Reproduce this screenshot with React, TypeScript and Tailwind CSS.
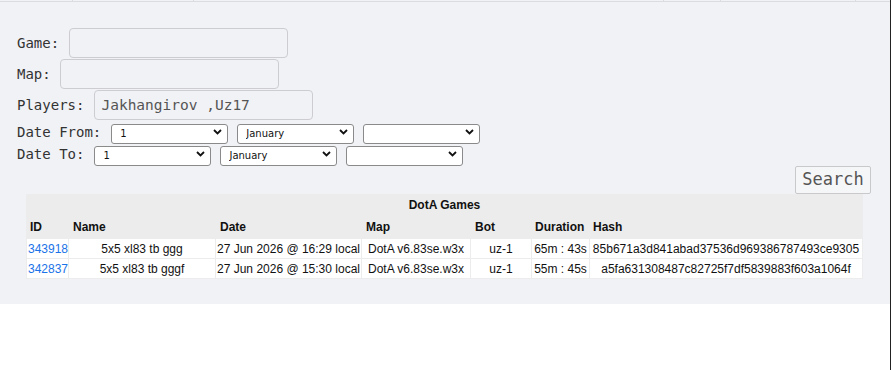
import React from 'react';

const games = [
  { id: '343918', name: '5x5 xl83 tb ggg', date: '27 Jun 2026 @ 16:29 local', map: 'DotA v6.83se.w3x', bot: 'uz-1', duration: '65m : 43s', hash: '85b671a3d841abad37536d969386787493ce9305' },
  { id: '342837', name: '5x5 xl83 tb gggf', date: '27 Jun 2026 @ 15:30 local', map: 'DotA v6.83se.w3x', bot: 'uz-1', duration: '55m : 45s', hash: 'a5fa631308487c82725f7df5839883f603a1064f' },
];

const Chevron = () => (
  <svg className="pointer-events-none absolute right-[6px] top-1/2 -translate-y-1/2" width="9" height="6" viewBox="0 0 9 6">
    <path d="M1 1 L4.5 4.5 L8 1" fill="none" stroke="#111" strokeWidth="1.8" />
  </svg>
);

const Select = ({ value }: { value: string }) => (
  <div className="relative w-[117px] h-[20px]">
    <select
      defaultValue={value}
      className="appearance-none w-full h-full bg-white border border-[#8a8a8a] rounded-[3px] pl-[8px] text-[10px] text-[#111] font-['DejaVu_Sans',sans-serif] outline-none"
    >
      <option value={value}>{value}</option>
    </select>
    <Chevron />
  </div>
);

const DateRow = ({ label }: { label: string }) => (
  <div className="flex items-center h-[20px] mt-[2px]">
    <span>{label}</span>
    <div className="flex gap-[9px] ml-[10px]">
      <Select value="1" />
      <Select value="January" />
      <Select value="" />
    </div>
  </div>
);

const Field = ({ label, value, ml }: { label: string; value?: string; ml: string }) => (
  <div className="flex items-center h-[30px] mt-[1px]">
    <span>{label}</span>
    <input
      defaultValue={value}
      className={`${ml} w-[219px] h-[30px] bg-transparent border border-[#cdcdd1] rounded-[4px] px-[6px] text-[14.5px] text-[#555] outline-none font-['DejaVu_Sans_Mono',monospace]`}
    />
  </div>
);

export default function App() {
  return (
    <div className="flex w-[891px] h-[370px] bg-white">
      <div className="w-[890px] self-start bg-[#f1f2f6] pb-[25px] font-['DejaVu_Sans_Mono',monospace] text-[14px] text-[#333]">
        {/* clipped previous row */}
        <div className="flex h-[2px] border-b border-[#dcdcde]">
          <span className="w-[73px] border-r border-[#dcdcde]" />
          <span className="w-[121px] border-r border-[#dcdcde]" />
          <span className="w-[470px] border-r border-[#dcdcde]" />
          <span className="w-[57px] border-r border-[#dcdcde]" />
          <span className="w-[135px] border-r border-[#dcdcde]" />
        </div>

        <div className="pl-[17px] mt-[26px]">
          <Field label="Game:" ml="ml-[10px]" />
          <Field label="Map:" ml="ml-[9px]" />
          <Field label="Players:" ml="ml-[10px]" value="Jakhangirov ,Uz17" />
          <DateRow label="Date From:" />
          <DateRow label="Date To:" />
        </div>

        <div className="flex justify-end pr-[19px] mt-[2px]">
          <button className="w-[76px] h-[28px] border border-[#c9c9cc] rounded-[2px] bg-[#f5f6f8] text-[17px] text-[#555] font-['DejaVu_Sans_Mono',monospace]">
            Search
          </button>
        </div>

        <div className="ml-[26px] w-[837px] bg-[#ececec] font-['Liberation_Sans',Arial,sans-serif] text-[12px] text-[#111]">
          <div className="h-[21px] flex items-center justify-center font-bold">DotA Games</div>
          <table className="w-full table-fixed border-separate border-spacing-[1px]">
            <colgroup>
              <col className="w-[41px]" />
              <col className="w-[146px]" />
              <col className="w-[145px]" />
              <col className="w-[108px]" />
              <col className="w-[60px]" />
              <col className="w-[57px]" />
              <col className="w-[272px]" />
            </colgroup>
            <thead>
              <tr className="h-[22px] text-left font-bold">
                <th className="px-[3px]">ID</th>
                <th className="px-[4px]">Name</th>
                <th className="px-[4px]">Date</th>
                <th className="px-[4px]">Map</th>
                <th className="px-[4px]">Bot</th>
                <th className="px-[3px]">Duration</th>
                <th className="px-[3px]">Hash</th>
              </tr>
            </thead>
            <tbody>
              {games.map((g) => (
                <tr key={g.id} className="h-[19px] text-center whitespace-nowrap">
                  <td className="bg-white text-left px-[1px]">
                    <a href="#" className="text-[#1a73e8]">{g.id}</a>
                  </td>
                  <td className="bg-white p-0">{g.name}</td>
                  <td className="bg-white p-0">{g.date}</td>
                  <td className="bg-white p-0">{g.map}</td>
                  <td className="bg-white p-0">{g.bot}</td>
                  <td className="bg-white p-0">{g.duration}</td>
                  <td className="bg-white p-0">{g.hash}</td>
                </tr>
              ))}
            </tbody>
          </table>
        </div>
      </div>
      <div className="w-[1px] h-full bg-[#222]" />
    </div>
  );
}
